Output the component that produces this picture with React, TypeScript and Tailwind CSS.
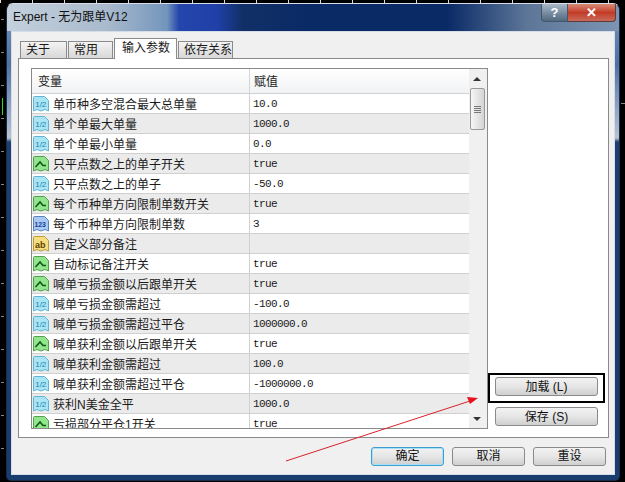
type Kind = 'v' | 'b' | 'i' | 's'

const rows: { name: string; value: string; kind: Kind }[] = [
  { name: '单币种多空混合最大总单量', value: '10.0', kind: 'v' },
  { name: '单个单最大单量', value: '1000.0', kind: 'v' },
  { name: '单个单最小单量', value: '0.0', kind: 'v' },
  { name: '只平点数之上的单子开关', value: 'true', kind: 'b' },
  { name: '只平点数之上的单子', value: '-50.0', kind: 'v' },
  { name: '每个币种单方向限制单数开关', value: 'true', kind: 'b' },
  { name: '每个币种单方向限制单数', value: '3', kind: 'i' },
  { name: '自定义部分备注', value: '', kind: 's' },
  { name: '自动标记备注开关', value: 'true', kind: 'b' },
  { name: '喊单亏损金额以后跟单开关', value: 'true', kind: 'b' },
  { name: '喊单亏损金额需超过', value: '-100.0', kind: 'v' },
  { name: '喊单亏损金额需超过平仓', value: '1000000.0', kind: 'v' },
  { name: '喊单获利金额以后跟单开关', value: 'true', kind: 'b' },
  { name: '喊单获利金额需超过', value: '100.0', kind: 'v' },
  { name: '喊单获利金额需超过平仓', value: '-1000000.0', kind: 'v' },
  { name: '获利N美金全平', value: '1000.0', kind: 'v' },
  { name: '亏损部分平仓1开关', value: 'true', kind: 'b' },
]

const tabs = ['关于', '常用', '输入参数', '依存关系']

function TypeIcon({ kind }: { kind: Kind }) {
  const colors = {
    v: { fill: '#a8e4f4', stroke: '#62b4d2', ink: '#2384ad' },
    b: { fill: '#93e48e', stroke: '#55a04f', ink: '#0c5c10' },
    i: { fill: '#a9c9f2', stroke: '#5a84bc', ink: '#123f94' },
    s: { fill: '#f5dd80', stroke: '#bd9d38', ink: '#5f4400' },
  }[kind]
  return (
    <svg width="16" height="16" viewBox="0 0 16 16" className="flex-none">
      <path
        d="M0.5 1.5 Q0.5 0.5 1.5 0.5 H11.5 L15.5 4.5 V15 L12 13.5 L8 15 L4 13.5 L0.5 15 Z"
        fill={colors.fill}
        stroke={colors.stroke}
      />
      {kind === 'b' && <path d="M2.5 11 L7 6 L10 9.5 H13" fill="none" stroke={colors.ink} strokeWidth="1.6" />}
      {kind === 'v' && (
        <text x="2.2" y="10.5" fontSize="8" fontFamily="Liberation Sans, sans-serif" fill={colors.ink}>
          1/2
        </text>
      )}
      {kind === 'i' && (
        <text x="1.4" y="11" fontSize="6.8" fontWeight="700" fontFamily="Liberation Sans, sans-serif" fill={colors.ink}>
          123
        </text>
      )}
      {kind === 's' && (
        <text x="2" y="11.5" fontSize="9" fontWeight="700" fontFamily="Liberation Sans, sans-serif" fill={colors.ink}>
          ab
        </text>
      )}
    </svg>
  )
}

function DialogButton({ label, primary, className }: { label: string; primary?: boolean; className?: string }) {
  return (
    <button
      type="button"
      className={`flex h-[19px] items-center justify-center rounded-[3px] border bg-gradient-to-b from-[#f2f2f2] via-[#e6e6e6] to-[#cfcfcf] text-[12px] leading-none text-[#111] ${
        primary ? 'border-[#3c9fd0] shadow-[inset_0_0_0_1px_#a8e0f5]' : 'border-[#8a8a8a]'
      } ${className ?? ''}`}
    >
      {label}
    </button>
  )
}

export default function App() {
  return (
    <div
      className="relative h-[482px] w-[625px] overflow-hidden bg-black pl-[6px] pt-[3px] text-[12px] text-[#1a1a1a]"
      style={{ fontFamily: '"Liberation Sans", "Noto Sans CJK SC", sans-serif' }}
    >
      {/* bits of the chart behind the window */}
      <div className="absolute left-0 top-0 h-[3px] w-full bg-[repeating-linear-gradient(90deg,#ddd_0,#ddd_1px,transparent_1px,transparent_32px)]" />
      <div className="absolute left-[1px] top-[19px] h-[462px] w-[3px] bg-[repeating-linear-gradient(180deg,#888_0,#888_1px,transparent_1px,transparent_33px)]" />
      <div className="absolute left-[2px] top-[98px] h-[17px] w-px bg-[#2bdc2b]" />
      <div className="absolute left-[621px] top-[103px] h-px w-[4px] bg-[#888]" />

      <div className="flex h-[478px] w-[614px] flex-col rounded-t-[7px] rounded-b-[5px] border border-[#1a2c48] border-t-[#d8dfe8] bg-[linear-gradient(180deg,#7c97ba_0,#4f72a4_60px,#8a9fc0_100px,#b8c2d0_134px,#1c3f72_138px,#1a3d70_100%)] px-[4px] pb-[5px]">
        {/* title bar */}
        <div className="-mx-[4px] flex h-[27px] flex-none items-start justify-between rounded-t-[6px] bg-[linear-gradient(90deg,#c4d0dc_0,#a9bacd_100px,#7395bc_160px,#2446ac_172px,#2040a8_210px,#123067_235px,#0a2a66_300px,#0a2a66_440px,#5d7698_520px,#7d95b3_100%)] pl-[6px] pr-[3px]">
          <div className="pt-[5px] text-[12px] leading-[16px] text-[#111]">Expert - 无为跟单V12</div>
          <div className="flex h-[18px]">
            <div className="flex w-[27px] items-center justify-center rounded-bl-[4px] border border-t-0 border-[#44566e] bg-gradient-to-b from-[#a8b8c8] to-[#51687f] text-[13px] font-bold text-white">
              ?
            </div>
            <div className="flex w-[48px] items-center justify-center rounded-br-[4px] border border-l-0 border-t-0 border-[#5e3a3a] bg-gradient-to-b from-[#d98a78] via-[#c23a25] to-[#c76a58] text-[13px] font-bold text-white">
              ✕
            </div>
          </div>
        </div>

        {/* dialog body */}
        <div className="flex min-h-0 flex-1 flex-col border border-[#d5dde8] bg-[#f0f0f0] px-[6px] pt-[5px]">
          <div className="flex h-[21px] flex-none items-end gap-[1px] pl-[2px]">
            {tabs.map((tab, i) => (
              <div
                key={tab}
                className={
                  i === 2
                    ? 'relative z-10 -mb-px flex h-[21px] w-[63px] items-center border border-b-0 border-[#8a8a8a] bg-white pb-[2px] pl-[7px] text-[12px]'
                    : `flex h-[17px] items-center border border-b-0 border-[#8a8a8a] bg-gradient-to-b from-[#f4f4f4] to-[#d8d8d8] pl-[5px] text-[12px] ${
                        i === 0 ? 'w-[47px]' : i === 1 ? 'w-[45px]' : 'w-[55px]'
                      }`
                }
              >
                {tab}
              </div>
            ))}
          </div>

          <div className="flex h-[380px] w-[591px] flex-none border border-[#8a8a8a] bg-white pl-[12px] pt-[9px]">
            {/* parameter list */}
            <div className="flex h-[361px] w-[457px] flex-none border border-[#8a8a8a] bg-white">
              <div className="min-w-0 flex-1 overflow-hidden">
                <div className="flex h-[25px] items-center border-b border-[#d0d0d0] bg-gradient-to-b from-white to-[#f1f2f4]">
                  <div className="flex h-full w-[218px] flex-none items-center border-r border-[#d5d5d5] pl-[6px] pt-[2px]">变量</div>
                  <div className="pl-[4px] pt-[2px]">赋值</div>
                </div>
                {rows.map((row, i) => (
                  <div
                    key={row.name}
                    className={`flex h-[20px] items-center border-b border-[#d0d0d0] ${i % 2 ? 'bg-[#ebebeb]' : 'bg-white'}`}
                  >
                    <div className="flex h-full w-[218px] flex-none items-center gap-[4px] border-r border-[#d0d0d0] pl-[1px]">
                      <TypeIcon kind={row.kind} />
                      <span className="whitespace-nowrap pt-[2px]">{row.name}</span>
                    </div>
                    <div
                      className="pl-[3px] pt-[1px] text-[11px] tracking-[-0.6px]"
                      style={{ fontFamily: '"Liberation Mono", monospace' }}
                    >
                      {row.value}
                    </div>
                  </div>
                ))}
              </div>

              {/* scrollbar */}
              <div className="flex w-[18px] flex-none flex-col items-center bg-[#f0f0f0] pr-[2px]">
                <div className="mt-[8px] h-0 w-0 border-x-[4px] border-b-[4px] border-x-transparent border-b-[#333]" />
                <div className="mt-[7px] flex h-[42px] w-[15px] flex-col items-center justify-center gap-[1px] rounded-[2px] border border-[#999] bg-gradient-to-r from-[#f6f6f6] to-[#d4d4d4]">
                  <div className="h-px w-[7px] bg-[#777]" />
                  <div className="h-px w-[7px] bg-[#777]" />
                  <div className="h-px w-[7px] bg-[#777]" />
                  <div className="h-px w-[7px] bg-[#777]" />
                </div>
                <div className="mb-[7px] mt-auto h-0 w-0 border-x-[4px] border-t-[4px] border-x-transparent border-t-[#333]" />
              </div>
            </div>

            {/* load / save */}
            <div className="flex flex-1 flex-col items-start pt-[305px]">
              <div className="border-[2px] border-black px-[5px] pb-[5px] pt-[2px]">
                <DialogButton label="加载 (L)" className="w-[103px]" />
              </div>
              <DialogButton label="保存 (S)" className="ml-[7px] mt-[4px] w-[103px]" />
            </div>
          </div>

          <div className="flex flex-1 items-center justify-end gap-[8px] pr-[2px]">
            <DialogButton label="确定" primary className="w-[73px]" />
            <DialogButton label="取消" className="w-[73px]" />
            <DialogButton label="重设" className="w-[73px]" />
          </div>
        </div>
      </div>

      {/* red annotation arrow */}
      <svg className="absolute left-0 top-0" width="625" height="482">
        <line x1="286" y1="461" x2="470" y2="401" stroke="#d8222a" strokeWidth="1" />
        <polygon points="478,398 467,397 470,404" fill="#e8101c" />
      </svg>
    </div>
  )
}
